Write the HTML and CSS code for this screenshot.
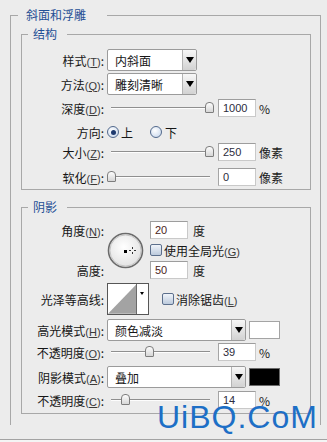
FILE: index.html
```html
<!DOCTYPE html>
<html lang="zh-CN">
<head>
    <meta charset="UTF-8">
    <meta name="viewport" content="width=device-width, initial-scale=1.0">
    <title>斜面和浮雕</title>
    <link rel="stylesheet" href="styles.css">
</head>
<body>
    <fieldset class="group outer">
        <legend>斜面和浮雕</legend>

        <fieldset class="group inner structure">
            <legend>结构</legend>

            <div class="row">
                <span class="lbl">样式<span class="key">(<u>T</u>)</span>:</span>
                <div class="combo short"><span>内斜面</span><i class="drop"></i></div>
            </div>
            <div class="row">
                <span class="lbl">方法<span class="key">(<u>Q</u>)</span>:</span>
                <div class="combo short"><span>雕刻清晰</span><i class="drop"></i></div>
            </div>
            <div class="row">
                <span class="lbl">深度<span class="key">(<u>D</u>)</span>:</span>
                <div class="slider"><i class="thumb" style="left: 98px"></i></div>
                <div class="num">1000</div>
                <span class="unit">%</span>
            </div>
            <div class="row dir">
                <span class="lbl">方向:</span>
                <span class="radio on"></span><span class="opt">上</span>
                <span class="radio second"></span><span class="opt">下</span>
            </div>
            <div class="row slim">
                <span class="lbl">大小<span class="key">(<u>Z</u>)</span>:</span>
                <div class="slider"><i class="thumb" style="left: 98px"></i></div>
                <div class="num">250</div>
                <span class="unit">像素</span>
            </div>
            <div class="row slim soften">
                <span class="lbl">软化<span class="key">(<u>F</u>)</span>:</span>
                <div class="slider"><i class="thumb" style="left: 0px"></i></div>
                <div class="num">0</div>
                <span class="unit">像素</span>
            </div>
        </fieldset>

        <fieldset class="group inner shading">
            <legend>阴影</legend>

            <div class="angle">
                <span class="lbl a1">角度<span class="key">(<u>N</u>)</span>:</span>
                <svg class="dial" width="37" height="37" viewBox="0 0 37 37">
                    <defs>
                        <radialGradient id="dialFill" cx="0.45" cy="0.4" r="0.6">
                            <stop offset="0" stop-color="#ffffff"/>
                            <stop offset="1" stop-color="#e2e2e2"/>
                        </radialGradient>
                    </defs>
                    <circle cx="18.5" cy="18.5" r="17" fill="url(#dialFill)" stroke="#6b6b6b" stroke-width="1.6"/>
                    <circle cx="18.5" cy="18.5" r="15.6" fill="none" stroke="#c4c4c4" stroke-width="1"/>
                    <rect x="17" y="18" width="3" height="3" fill="#000"/>
                    <path d="M25.5 15v2M25.5 20v2M22 18.5h2M27 18.5h2" stroke="#333" stroke-width="1"/>
                </svg>
                <div class="num deg a1v">20</div>
                <span class="unit">度</span>
                <div class="check-line">
                    <span class="check"></span><span class="opt">使用全局光<span class="key">(<u>G</u>)</span></span>
                </div>
                <span class="lbl a3">高度:</span>
                <div class="num deg a3v">50</div>
                <span class="unit a3u">度</span>
            </div>

            <div class="row contour-row">
                <span class="lbl">光泽等高线:</span>
                <div class="contour">
                    <svg width="29" height="30" viewBox="0 0 29 30">
                        <polygon points="0,30 29,0 29,30" fill="#a3a3a3"/>
                    </svg>
                    <span class="contour-btn"><i></i></span>
                </div>
                <span class="check gap"></span><span class="opt">消除锯齿<span class="key">(<u>L</u>)</span></span>
            </div>

            <div class="row mode-hi">
                <span class="lbl">高光模式<span class="key">(<u>H</u>)</span>:</span>
                <div class="combo long"><span>颜色减淡</span><i class="drop"></i></div>
                <span class="swatch"></span>
            </div>
            <div class="row slim op-hi">
                <span class="lbl">不透明度<span class="key">(<u>O</u>)</span>:</span>
                <div class="slider"><i class="thumb" style="left: 38px"></i></div>
                <div class="num">39</div>
                <span class="unit">%</span>
            </div>
            <div class="row mode-sh">
                <span class="lbl">阴影模式<span class="key">(<u>A</u>)</span>:</span>
                <div class="combo long"><span>叠加</span><i class="drop"></i></div>
                <span class="swatch black"></span>
            </div>
            <div class="row slim op-sh">
                <span class="lbl">不透明度<span class="key">(<u>C</u>)</span>:</span>
                <div class="slider"><i class="thumb" style="left: 14px"></i></div>
                <div class="num">14</div>
                <span class="unit">%</span>
            </div>
        </fieldset>
    </fieldset>

    <div class="footer"></div>

    <div class="watermark">UiBQ.CoM</div>
</body>
</html>
```

FILE: styles.css
```css
:root {
    --bg: #ececec;
    --line: #a8a8a8;
    --title: #1f4f95;
    --field: #a9a9a9;
}

body {
    margin: 0;
    background: var(--bg);
    font-family: "Noto Sans CJK SC", "Liberation Sans", sans-serif;
    font-size: 12px;
    color: #161616;
    position: relative;
    height: 442px;
    overflow: hidden;
}

/* group boxes */
.group {
    margin: 0;
    min-width: 0;
    border: 1px solid var(--line);
}

.group legend {
    color: var(--title);
    font-size: 12px;
    line-height: 16px;
}

.outer {
    margin: 7px 6px 0 10px;
    padding: 3px 9px 11px 10px;
    border-bottom: none;
}

.outer > legend {
    margin-left: -3px;
    padding: 0 21px 0 8px;
}

.inner {
    padding: 6px 0 3px 0;
}

.inner > legend {
    margin-left: 6px;
    padding: 0 10px 0 5px;
}

.shading {
    margin-top: 9px;
    padding: 5px 0 4px 0;
}

/* rows */
.row {
    display: flex;
    align-items: center;
    height: 24px;
}

.row.slim { height: 18px; }
.row.dir { height: 22px; margin-top: 1px; }
.row.soften { margin-top: 7px; }

.lbl {
    width: 82px;
    margin-right: 3px;
    text-align: right;
    white-space: nowrap;
    flex-shrink: 0;
}

.key {
    font-family: "Liberation Sans", sans-serif;
    font-size: 11px;
    color: #3a3a3a;
}

.key u {
    text-decoration-thickness: 1px;
    text-underline-offset: 1px;
}

/* combo boxes */
.combo {
    height: 22px;
    box-sizing: border-box;
    border: 1px solid #9b9b9b;
    border-radius: 2px;
    background: #fff;
    display: flex;
    align-items: center;
    justify-content: space-between;
    padding-left: 7px;
}

.combo.short { width: 90px; }
.combo.long { width: 139px; }

.drop {
    width: 14px;
    height: 20px;
    box-sizing: border-box;
    border-left: 1px solid #b4b4b4;
    border-radius: 0 2px 2px 0;
    background: linear-gradient(#f7f7f7, #d2d2d2);
    position: relative;
}

.drop::after {
    content: "";
    position: absolute;
    left: 3px;
    top: 7px;
    border-left: 4px solid transparent;
    border-right: 4px solid transparent;
    border-top: 6px solid #000;
}

.swatch {
    width: 31px;
    height: 18px;
    box-sizing: border-box;
    margin-left: 3px;
    border: 1px solid #a4a4a4;
    background: #fff;
}

.swatch.black {
    background: #000;
    border-color: #6a6a6a;
}

/* sliders */
.slider {
    width: 107px;
    height: 14px;
    position: relative;
    flex-shrink: 0;
}

.slider::before {
    content: "";
    position: absolute;
    left: 4px;
    right: 4px;
    top: 6px;
    height: 1px;
    background: #8f8f8f;
    border-bottom: 1px solid #fdfdfd;
}

.thumb {
    position: absolute;
    top: 1px;
    width: 9px;
    height: 11px;
    box-sizing: border-box;
    border: 1px solid #7d7d7d;
    border-radius: 4px 4px 1px 1px;
    background: linear-gradient(#fdfdfd, #d6d6d6);
}

.num {
    width: 38px;
    height: 18px;
    box-sizing: border-box;
    margin-left: 4px;
    border: 1px solid var(--field);
    border-color: #9d9d9d #c9c9c9 #c9c9c9 #a5a5a5;
    background: #fff;
    padding-left: 4px;
    font-family: "Liberation Sans", sans-serif;
    font-size: 11px;
    line-height: 16px;
    color: #2c2c3c;
}

.num.deg { color: #4c1e22; margin-left: 0; }

.unit {
    margin-left: 3px;
    color: #1b1b1b;
}

/* radio + checkbox */
.radio {
    width: 12px;
    height: 12px;
    box-sizing: border-box;
    border: 1px solid #52698c;
    border-radius: 50%;
    background: radial-gradient(circle at 40% 35%, #ffffff, #c2d3ea);
    position: relative;
}

.radio.on::after {
    content: "";
    position: absolute;
    left: 2.5px;
    top: 2.5px;
    width: 5px;
    height: 5px;
    border-radius: 50%;
    background: #1e3a6e;
}

.radio.second { margin-left: 17px; }

.opt { margin-left: 2px; }
.dir .opt:last-child { margin-left: 3px; }

.check {
    width: 12px;
    height: 12px;
    box-sizing: border-box;
    border: 1px solid #5c6f8c;
    border-radius: 2px;
    background: linear-gradient(#f0f4fa, #bccadc);
    flex-shrink: 0;
}

.check.gap { margin-left: 13px; }

/* angle block */
.angle {
    display: grid;
    grid-template-columns: 85px 43px 40px auto;
    grid-template-rows: 20px 20px 20px;
    align-items: center;
}

.angle .a1 { grid-column: 1; grid-row: 1; }
.angle .dial { grid-column: 2; grid-row: 1 / 4; align-self: center; margin-top: 1px; }
.angle .a1v { grid-column: 3; grid-row: 1; }
.angle .a3 { grid-column: 1; grid-row: 3; }
.angle .a3v { grid-column: 3; grid-row: 3; }
.angle .a3u { grid-column: 4; grid-row: 3; }

.check-line {
    grid-column: 3 / 5;
    grid-row: 2;
    display: flex;
    align-items: center;
    white-space: nowrap;
}

/* contour picker */
.row.contour-row { height: 32px; margin-top: 3px; }

.contour {
    width: 42px;
    height: 32px;
    box-sizing: border-box;
    border: 1px solid #565656;
    background: #fff;
    display: flex;
}

.contour svg { display: block; }

.contour-btn {
    width: 11px;
    border-left: 1px solid #6a6a6a;
    position: relative;
}

.contour-btn i {
    position: absolute;
    left: 3px;
    top: 8px;
    border-left: 2px solid transparent;
    border-right: 2px solid transparent;
    border-top: 3px solid #000;
}

.row.mode-hi { margin-top: 3px; }
.row.op-hi { margin-top: 1px; }
.row.mode-sh { margin-top: 4px; }
.row.op-sh { margin-top: 2px; }

.footer {
    margin-top: 14px;
    border-top: 1px solid #a3a3a3;
    height: 2px;
    background: #f4f4f4;
}

.watermark {
    position: absolute;
    left: 157px;
    top: 401px;
    font-family: "Liberation Sans", sans-serif;
    font-size: 32px;
    line-height: 32px;
    letter-spacing: 1px;
    color: #1d6fc6;
}
```
